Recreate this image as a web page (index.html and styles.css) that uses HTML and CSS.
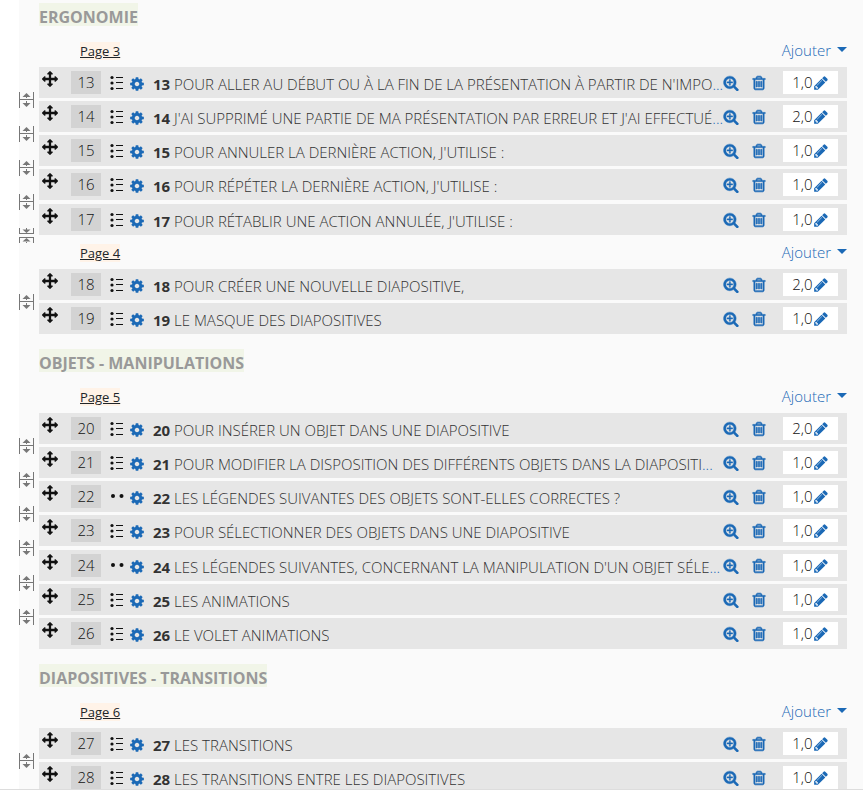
FILE: index.html
```
<!DOCTYPE html>
<html lang="fr">
<head>
    <meta charset="UTF-8">
    <meta name="viewport" content="width=device-width, initial-scale=1.0">
    <title>Modifier le test</title>
    <link rel="stylesheet" href="styles.css">
</head>
<body>
    <!-- Icons -->
    <svg class="sprite" aria-hidden="true">
        <symbol id="move" viewBox="0 0 1792 1792"><path d="M1792 896q0 26-19 45l-256 256q-19 19-45 19t-45-19-19-45v-128h-384v384h128q26 0 45 19t19 45-19 45l-256 256q-19 19-45 19t-45-19l-256-256q-19-19-19-45t19-45 45-19h128v-384h-384v128q0 26-19 45t-45 19-45-19l-256-256q-19-19-19-45t19-45l256-256q19-19 45-19t45 19 19 45v128h384v-384h-128q-26 0-45-19t-19-45 19-45l256-256q19-19 45-19t45 19l256 256q19 19 19 45t-19 45-45 19h-128v384h384v-128q0-26 19-45t45-19 45 19l256 256q19 19 19 45z"/></symbol>
        <symbol id="cog" viewBox="0 0 1792 1792"><path d="M1152 896q0-106-75-181t-181-75-181 75-75 181 75 181 181 75 181-75 75-181zm512-109v222q0 12-8 23t-20 13l-185 28q-19 54-39 91 35 50 107 138 10 12 10 25t-9 23q-27 37-99 108t-94 71q-12 0-26-9l-138-108q-44 23-91 38-16 136-29 186-7 28-36 28h-222q-14 0-24.5-8.5t-11.5-21.5l-28-184q-49-16-90-37l-141 107q-10 9-25 9-14 0-25-11-126-114-165-168-7-10-7-23 0-12 8-23 15-21 51-66.5t54-70.5q-27-50-41-99l-183-27q-13-2-21-12.5t-8-23.5v-222q0-12 8-23t19-13l186-28q14-46 39-92-40-57-107-138-10-12-10-24 0-10 9-23 26-36 98.5-107.5t94.5-71.5q13 0 26 10l138 107q44-23 91-38 16-136 29-186 7-28 36-28h222q14 0 24.5 8.5t11.5 21.5l28 184q49 16 90 37l142-107q9-9 24-9 13 0 25 10 129 119 165 170 7 8 7 22 0 12-8 23-15 21-51 66.5t-54 70.5q26 50 41 98l183 28q13 2 21 12.5t8 23.5z"/></symbol>
        <symbol id="zoom" viewBox="0 0 1792 1792"><path stroke="currentColor" stroke-width="50" d="M1088 800v64q0 13-9.500 22.500t-22.500 9.500h-224v224q0 13-9.500 22.500t-22.500 9.500h-64q-13 0-22.500-9.500t-9.500-22.500v-224h-224q-13 0-22.500-9.500t-9.500-22.500v-64q0-13 9.500-22.500t22.500-9.500h224v-224q0-13 9.500-22.500t22.500-9.500h64q13 0 22.500 9.500t9.500 22.500v224h224q13 0 22.500 9.500t9.500 22.500zm128 32q0-185-131.500-316.500t-316.500-131.500-316.500 131.500-131.500 316.500 131.500 316.500 316.500 131.500 316.500-131.500 131.500-316.500zm512 832q0 53-37.500 90.500t-90.500 37.500q-54 0-90-38l-343-342q-179 124-399 124-143 0-273.500-55.500t-225-150-150-225-55.500-273.500 55.500-273.500 150-225 225-150 273.500-55.500 273.500 55.500 225 150 150 225 55.500 273.500q0 220-124 399l343 343q37 37 37 90z"/></symbol>
        <symbol id="trash" viewBox="0 0 1792 1792"><path stroke="currentColor" stroke-width="70" d="M704 736v576q0 14-9 23t-23 9h-64q-14 0-23-9t-9-23v-576q0-14 9-23t23-9h64q14 0 23 9t9 23zm256 0v576q0 14-9 23t-23 9h-64q-14 0-23-9t-9-23v-576q0-14 9-23t23-9h64q14 0 23 9t9 23zm256 0v576q0 14-9 23t-23 9h-64q-14 0-23-9t-9-23v-576q0-14 9-23t23-9h64q14 0 23 9t9 23zm128 724v-948h-896v948q0 22 7 40.5t14.5 27 10.500 8.500h832q3 0 10.500-8.500t14.500-27 7-40.500zm-672-1076h448l-48-117q-7-9-17-11h-317q-10 2-17 11zm928 32v64q0 14-9 23t-23 9h-96v948q0 83-47 143.500t-113 60.500h-832q-66 0-113-58.500t-47-141.500v-952h-96q-14 0-23-9t-9-23v-64q0-14 9-23t23-9h309l70-167q15-37 54-63t79-26h320q40 0 79 26t54 63l70 167h309q14 0 23 9t9 23z"/></symbol>
        <symbol id="pencil" viewBox="0 0 1792 1792"><path d="M491 1536l91-91-235-235-91 91v107h128v128h107zm523-928q0-22-22-22-10 0-17 7l-542 542q-7 7-7 17 0 22 22 22 10 0 17-7l542-542q7-7 7-17zm-54-192l416 416-832 832h-416v-416zm683 96q0 53-37 90l-166 166-416-416 166-165q36-38 90-38 53 0 91 38l235 234q37 39 37 91z"/></symbol>
        <symbol id="choice" viewBox="0 0 16 16"><g fill="#111"><circle cx="3" cy="2.500" r="1.600"/><circle cx="3" cy="8" r="1.600"/><circle cx="3" cy="13.500" r="1.600"/><path d="M7 2h7v1H7zM7 7h7v1H7zM7 13h7v1H7z"/></g></symbol>
        <symbol id="match" viewBox="0 0 16 16"><g fill="#111"><circle cx="4" cy="7" r="2"/><circle cx="12.500" cy="7" r="2"/></g></symbol>
        <symbol id="split" viewBox="0 0 16 16"><path d="M0 0h1v16H0zM14 0h1v16h-1zM1 7h13v1H1zM7 3h1v3H7zM7 9h1v3H7zM3.500 5l4-4 4 4zM3.500 11h8l-4 4z"/></symbol>
        <symbol id="join" viewBox="0 0 16 18"><path d="M0 1h1v6H0zM14 1h1v6h-1zM0 6h15v1H0zM7 1h1v2H7zM3.500 2.500h8l-4 3.500zM0 10h15v1H0zM0 10h1v6H0zM14 10h1v6h-1zM3.500 14.500h8l-4-3.500zM7 14h1v2H7z"/></symbol>
    </svg>

    <main class="quiz">
        <section class="section">
            <h3><span>ERGONOMIE</span></h3>
            <div class="page">
                <a href="#">Page 3</a>
                <button class="add">Ajouter</button>
            </div>
            <ul class="slots">
                <li>
                    <button class="split" aria-label="Saut de page"><svg><use href="#split"/></svg></button>
                    <div class="slot">
                        <svg class="move"><use href="#move"/></svg>
                        <span class="number">13</span>
                        <svg class="type"><use href="#choice"/></svg>
                        <a class="title" href="#"><svg><use href="#cog"/></svg><span class="text"><span><b>13</b> POUR ALLER AU DÉBUT OU À LA FIN DE LA PRÉSENTATION À PARTIR DE N'IMPO</span>...</span></a>
                        <a class="action" href="#" aria-label="Aperçu"><svg><use href="#zoom"/></svg></a>
                        <button class="action" aria-label="Supprimer"><svg><use href="#trash"/></svg></button>
                        <span class="mark">1,0<a href="#" aria-label="Modifier la note"><svg><use href="#pencil"/></svg></a></span>
                    </div>
                </li>
                <li>
                    <button class="split" aria-label="Saut de page"><svg><use href="#split"/></svg></button>
                    <div class="slot">
                        <svg class="move"><use href="#move"/></svg>
                        <span class="number">14</span>
                        <svg class="type"><use href="#choice"/></svg>
                        <a class="title" href="#"><svg><use href="#cog"/></svg><span class="text"><span><b>14</b> J'AI SUPPRIMÉ UNE PARTIE DE MA PRÉSENTATION PAR ERREUR ET J'AI EFFECTUÉ</span>...</span></a>
                        <a class="action" href="#" aria-label="Aperçu"><svg><use href="#zoom"/></svg></a>
                        <button class="action" aria-label="Supprimer"><svg><use href="#trash"/></svg></button>
                        <span class="mark">2,0<a href="#" aria-label="Modifier la note"><svg><use href="#pencil"/></svg></a></span>
                    </div>
                </li>
                <li>
                    <button class="split" aria-label="Saut de page"><svg><use href="#split"/></svg></button>
                    <div class="slot">
                        <svg class="move"><use href="#move"/></svg>
                        <span class="number">15</span>
                        <svg class="type"><use href="#choice"/></svg>
                        <a class="title" href="#"><svg><use href="#cog"/></svg><span class="text"><span><b>15</b> POUR ANNULER LA DERNIÈRE ACTION, J'UTILISE :</span></span></a>
                        <a class="action" href="#" aria-label="Aperçu"><svg><use href="#zoom"/></svg></a>
                        <button class="action" aria-label="Supprimer"><svg><use href="#trash"/></svg></button>
                        <span class="mark">1,0<a href="#" aria-label="Modifier la note"><svg><use href="#pencil"/></svg></a></span>
                    </div>
                </li>
                <li>
                    <button class="split" aria-label="Saut de page"><svg><use href="#split"/></svg></button>
                    <div class="slot">
                        <svg class="move"><use href="#move"/></svg>
                        <span class="number">16</span>
                        <svg class="type"><use href="#choice"/></svg>
                        <a class="title" href="#"><svg><use href="#cog"/></svg><span class="text"><span><b>16</b> POUR RÉPÉTER LA DERNIÈRE ACTION, J'UTILISE :</span></span></a>
                        <a class="action" href="#" aria-label="Aperçu"><svg><use href="#zoom"/></svg></a>
                        <button class="action" aria-label="Supprimer"><svg><use href="#trash"/></svg></button>
                        <span class="mark">1,0<a href="#" aria-label="Modifier la note"><svg><use href="#pencil"/></svg></a></span>
                    </div>
                </li>
                <li>
                    <button class="split join" aria-label="Supprimer le saut de page"><svg><use href="#join"/></svg></button>
                    <div class="slot">
                        <svg class="move"><use href="#move"/></svg>
                        <span class="number">17</span>
                        <svg class="type"><use href="#choice"/></svg>
                        <a class="title" href="#"><svg><use href="#cog"/></svg><span class="text"><span><b>17</b> POUR RÉTABLIR UNE ACTION ANNULÉE, J'UTILISE :</span></span></a>
                        <a class="action" href="#" aria-label="Aperçu"><svg><use href="#zoom"/></svg></a>
                        <button class="action" aria-label="Supprimer"><svg><use href="#trash"/></svg></button>
                        <span class="mark">1,0<a href="#" aria-label="Modifier la note"><svg><use href="#pencil"/></svg></a></span>
                    </div>
                </li>
            </ul>
            <div class="page">
                <a href="#">Page 4</a>
                <button class="add">Ajouter</button>
            </div>
            <ul class="slots">
                <li>
                    <button class="split" aria-label="Saut de page"><svg><use href="#split"/></svg></button>
                    <div class="slot">
                        <svg class="move"><use href="#move"/></svg>
                        <span class="number">18</span>
                        <svg class="type"><use href="#choice"/></svg>
                        <a class="title" href="#"><svg><use href="#cog"/></svg><span class="text"><span><b>18</b> POUR CRÉER UNE NOUVELLE DIAPOSITIVE,</span></span></a>
                        <a class="action" href="#" aria-label="Aperçu"><svg><use href="#zoom"/></svg></a>
                        <button class="action" aria-label="Supprimer"><svg><use href="#trash"/></svg></button>
                        <span class="mark">2,0<a href="#" aria-label="Modifier la note"><svg><use href="#pencil"/></svg></a></span>
                    </div>
                </li>
                <li>
                    <div class="slot">
                        <svg class="move"><use href="#move"/></svg>
                        <span class="number">19</span>
                        <svg class="type"><use href="#choice"/></svg>
                        <a class="title" href="#"><svg><use href="#cog"/></svg><span class="text"><span><b>19</b> LE MASQUE DES DIAPOSITIVES</span></span></a>
                        <a class="action" href="#" aria-label="Aperçu"><svg><use href="#zoom"/></svg></a>
                        <button class="action" aria-label="Supprimer"><svg><use href="#trash"/></svg></button>
                        <span class="mark">1,0<a href="#" aria-label="Modifier la note"><svg><use href="#pencil"/></svg></a></span>
                    </div>
                </li>
            </ul>
        </section>

        <section class="section">
            <h3><span>OBJETS - MANIPULATIONS</span></h3>
            <div class="page">
                <a href="#">Page 5</a>
                <button class="add">Ajouter</button>
            </div>
            <ul class="slots">
                <li>
                    <button class="split" aria-label="Saut de page"><svg><use href="#split"/></svg></button>
                    <div class="slot">
                        <svg class="move"><use href="#move"/></svg>
                        <span class="number">20</span>
                        <svg class="type"><use href="#choice"/></svg>
                        <a class="title" href="#"><svg><use href="#cog"/></svg><span class="text"><span><b>20</b> POUR INSÉRER UN OBJET DANS UNE DIAPOSITIVE</span></span></a>
                        <a class="action" href="#" aria-label="Aperçu"><svg><use href="#zoom"/></svg></a>
                        <button class="action" aria-label="Supprimer"><svg><use href="#trash"/></svg></button>
                        <span class="mark">2,0<a href="#" aria-label="Modifier la note"><svg><use href="#pencil"/></svg></a></span>
                    </div>
                </li>
                <li>
                    <button class="split" aria-label="Saut de page"><svg><use href="#split"/></svg></button>
                    <div class="slot">
                        <svg class="move"><use href="#move"/></svg>
                        <span class="number">21</span>
                        <svg class="type"><use href="#choice"/></svg>
                        <a class="title" href="#"><svg><use href="#cog"/></svg><span class="text"><span><b>21</b> POUR MODIFIER LA DISPOSITION DES DIFFÉRENTS OBJETS DANS LA DIAPOSITI</span>...</span></a>
                        <a class="action" href="#" aria-label="Aperçu"><svg><use href="#zoom"/></svg></a>
                        <button class="action" aria-label="Supprimer"><svg><use href="#trash"/></svg></button>
                        <span class="mark">1,0<a href="#" aria-label="Modifier la note"><svg><use href="#pencil"/></svg></a></span>
                    </div>
                </li>
                <li>
                    <button class="split" aria-label="Saut de page"><svg><use href="#split"/></svg></button>
                    <div class="slot">
                        <svg class="move"><use href="#move"/></svg>
                        <span class="number">22</span>
                        <svg class="type"><use href="#match"/></svg>
                        <a class="title" href="#"><svg><use href="#cog"/></svg><span class="text"><span><b>22</b> LES LÉGENDES SUIVANTES DES OBJETS SONT-ELLES CORRECTES ?</span></span></a>
                        <a class="action" href="#" aria-label="Aperçu"><svg><use href="#zoom"/></svg></a>
                        <button class="action" aria-label="Supprimer"><svg><use href="#trash"/></svg></button>
                        <span class="mark">1,0<a href="#" aria-label="Modifier la note"><svg><use href="#pencil"/></svg></a></span>
                    </div>
                </li>
                <li>
                    <button class="split" aria-label="Saut de page"><svg><use href="#split"/></svg></button>
                    <div class="slot">
                        <svg class="move"><use href="#move"/></svg>
                        <span class="number">23</span>
                        <svg class="type"><use href="#choice"/></svg>
                        <a class="title" href="#"><svg><use href="#cog"/></svg><span class="text"><span><b>23</b> POUR SÉLECTIONNER DES OBJETS DANS UNE DIAPOSITIVE</span></span></a>
                        <a class="action" href="#" aria-label="Aperçu"><svg><use href="#zoom"/></svg></a>
                        <button class="action" aria-label="Supprimer"><svg><use href="#trash"/></svg></button>
                        <span class="mark">1,0<a href="#" aria-label="Modifier la note"><svg><use href="#pencil"/></svg></a></span>
                    </div>
                </li>
                <li>
                    <button class="split" aria-label="Saut de page"><svg><use href="#split"/></svg></button>
                    <div class="slot">
                        <svg class="move"><use href="#move"/></svg>
                        <span class="number">24</span>
                        <svg class="type"><use href="#match"/></svg>
                        <a class="title" href="#"><svg><use href="#cog"/></svg><span class="text"><span><b>24</b> LES LÉGENDES SUIVANTES, CONCERNANT LA MANIPULATION D'UN OBJET SÉLE</span>...</span></a>
                        <a class="action" href="#" aria-label="Aperçu"><svg><use href="#zoom"/></svg></a>
                        <button class="action" aria-label="Supprimer"><svg><use href="#trash"/></svg></button>
                        <span class="mark">1,0<a href="#" aria-label="Modifier la note"><svg><use href="#pencil"/></svg></a></span>
                    </div>
                </li>
                <li>
                    <button class="split" aria-label="Saut de page"><svg><use href="#split"/></svg></button>
                    <div class="slot">
                        <svg class="move"><use href="#move"/></svg>
                        <span class="number">25</span>
                        <svg class="type"><use href="#choice"/></svg>
                        <a class="title" href="#"><svg><use href="#cog"/></svg><span class="text"><span><b>25</b> LES ANIMATIONS</span></span></a>
                        <a class="action" href="#" aria-label="Aperçu"><svg><use href="#zoom"/></svg></a>
                        <button class="action" aria-label="Supprimer"><svg><use href="#trash"/></svg></button>
                        <span class="mark">1,0<a href="#" aria-label="Modifier la note"><svg><use href="#pencil"/></svg></a></span>
                    </div>
                </li>
                <li>
                    <div class="slot">
                        <svg class="move"><use href="#move"/></svg>
                        <span class="number">26</span>
                        <svg class="type"><use href="#choice"/></svg>
                        <a class="title" href="#"><svg><use href="#cog"/></svg><span class="text"><span><b>26</b> LE VOLET ANIMATIONS</span></span></a>
                        <a class="action" href="#" aria-label="Aperçu"><svg><use href="#zoom"/></svg></a>
                        <button class="action" aria-label="Supprimer"><svg><use href="#trash"/></svg></button>
                        <span class="mark">1,0<a href="#" aria-label="Modifier la note"><svg><use href="#pencil"/></svg></a></span>
                    </div>
                </li>
            </ul>
        </section>

        <section class="section">
            <h3><span>DIAPOSITIVES - TRANSITIONS</span></h3>
            <div class="page">
                <a href="#">Page 6</a>
                <button class="add">Ajouter</button>
            </div>
            <ul class="slots">
                <li>
                    <button class="split" aria-label="Saut de page"><svg><use href="#split"/></svg></button>
                    <div class="slot">
                        <svg class="move"><use href="#move"/></svg>
                        <span class="number">27</span>
                        <svg class="type"><use href="#choice"/></svg>
                        <a class="title" href="#"><svg><use href="#cog"/></svg><span class="text"><span><b>27</b> LES TRANSITIONS</span></span></a>
                        <a class="action" href="#" aria-label="Aperçu"><svg><use href="#zoom"/></svg></a>
                        <button class="action" aria-label="Supprimer"><svg><use href="#trash"/></svg></button>
                        <span class="mark">1,0<a href="#" aria-label="Modifier la note"><svg><use href="#pencil"/></svg></a></span>
                    </div>
                </li>
                <li>
                    <div class="slot">
                        <svg class="move"><use href="#move"/></svg>
                        <span class="number">28</span>
                        <svg class="type"><use href="#choice"/></svg>
                        <a class="title" href="#"><svg><use href="#cog"/></svg><span class="text"><span><b>28</b> LES TRANSITIONS ENTRE LES DIAPOSITIVES</span></span></a>
                        <a class="action" href="#" aria-label="Aperçu"><svg><use href="#zoom"/></svg></a>
                        <button class="action" aria-label="Supprimer"><svg><use href="#trash"/></svg></button>
                        <span class="mark">1,0<a href="#" aria-label="Modifier la note"><svg><use href="#pencil"/></svg></a></span>
                    </div>
                </li>
            </ul>
        </section>
    </main>
</body>
</html>
```
FILE: styles.css
```
* {
    box-sizing: border-box;
}
body {
    margin: 0;
    height: 100vh;
    padding-bottom: 4px;
    background-color: #fff;
    font-family: "Open Sans", "Noto Sans", sans-serif;
    font-size: 15px;
    font-weight: 300;
    line-height: 23px;
    color: #111;
}
.sprite {
    display: none;
}
svg {
    display: block;
    flex: none;
    width: 16px;
    height: 16px;
    fill: currentColor;
}
a {
    color: #1b69b6;
    text-decoration: none;
}
button {
    padding: 0;
    border: 0;
    background: none;
    font: inherit;
    color: #1b69b6;
    cursor: pointer;
}
.quiz {
    height: 100%;
    overflow: hidden;
    border-bottom: 1px solid #ddd;
    background: linear-gradient(to right, #fff 19px, #fafafa 19px);
    padding: 0 16px 0 19px;
}

/* Section heading and page line */
.section h3 {
    margin: 0 0 0 20px;
    padding: 3px 0 7px;
    font-size: 16px;
    font-weight: 700;
    line-height: 17px;
    color: #999;
}
.section + .section h3 {
    padding-top: 15px;
}
.section h3 span {
    display: block;
    width: fit-content;
    padding-top: 6px;
    background-color: #f1f5e8;
}
.page {
    display: flex;
    justify-content: space-between;
    align-items: center;
    height: 34px;
    padding-left: 61px;
}
.page a {
    margin-top: 2px;
    font-size: 13px;
    font-weight: 400;
    line-height: 18px;
    color: #212529;
    text-decoration: underline;
    background-color: #fff3e8;
}
.add::after {
    content: "";
    display: inline-block;
    margin-left: 6px;
    vertical-align: 4px;
    border-top: 5px solid;
    border-left: 5px solid transparent;
    border-right: 5px solid transparent;
}

/* Questions */
.slots {
    margin: 0;
    padding: 0;
    list-style: none;
}
.slots li {
    display: grid;
    grid-template-columns: 20px minmax(0, 1fr);
    margin-bottom: 3px;
}
.slots li:nth-child(4n) {
    margin-bottom: 4px;
}
.slots li:last-child {
    margin-bottom: 0;
}
.split {
    align-self: end;
    margin-bottom: -10px;
    color: #777;
}
.join svg {
    height: 18px;
}
.slot {
    grid-column: 2;
    display: flex;
    align-items: flex-start;
    padding: 4px 9px 4px 3px;
    background-color: #e6e6e6;
}
.number {
    width: 30px;
    margin: 0 8px 0 13px;
    text-align: center;
    background-color: #d3d3d3;
}
.type {
    margin-top: 4px;
}
.title {
    display: flex;
    flex: 1;
    align-items: center;
    min-width: 0;
    margin-left: 4px;
}
.title svg {
    margin-top: 3px;
}
.text {
    min-width: 0;
    margin: 2px -2px -2px 8px;
    overflow: hidden;
    white-space: nowrap;
    text-overflow: ellipsis;
}
.text span {
    color: #333;
}
.text b {
    font-weight: 700;
}
.action {
    margin: 4px 12px 0 0;
}
.mark {
    display: flex;
    justify-content: center;
    align-items: center;
    width: 55px;
    margin-left: 4px;
    background-color: #fff;
}
```
